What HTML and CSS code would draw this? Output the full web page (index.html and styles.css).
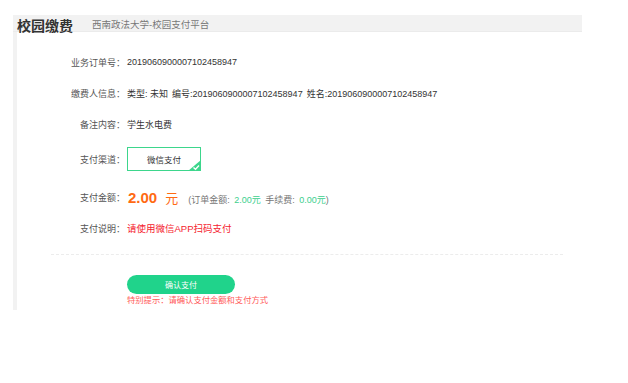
FILE: index.html
```html
<!DOCTYPE html>
<html lang="zh-CN">
<head>
<meta charset="utf-8">
<title>校园缴费</title>
<link rel="stylesheet" href="styles.css">
</head>
<body>
<div class="page">
  <div class="header">
    <span class="title">校园缴费</span>
    <span class="subtitle">西南政法大学-校园支付平台</span>
  </div>
  <div class="main">
    <div class="form">
      <div class="row">
        <div class="label">业务订单号：</div>
        <div class="value">2019060900007102458947</div>
      </div>
      <div class="row">
        <div class="label">缴费人信息：</div>
        <div class="value">
          <span class="part">类型: 未知</span>
          <span class="part">编号:2019060900007102458947</span>
          <span class="part">姓名:2019060900007102458947</span>
        </div>
      </div>
      <div class="row">
        <div class="label">备注内容：</div>
        <div class="value">学生水电费</div>
      </div>
      <div class="row row-channel">
        <div class="label">支付渠道：</div>
        <div class="value">
          <div class="channel">
            微信支付
            <svg class="corner" width="13" height="11" viewBox="0 0 13 11">
              <polygon points="13,0 13,11 0,11" fill="#3dd68c"/>
              <polyline points="5.5,7.5 7.5,9.3 11,5.5" fill="none" stroke="#fff" stroke-width="1.3"/>
            </svg>
          </div>
        </div>
      </div>
      <div class="row row-amount">
        <div class="label">支付金额：</div>
        <div class="value amount-line">
          <span class="amount">2.00</span>
          <span class="yuan">元</span>
          <span class="detail">(订单金额: <span class="green">2.00元</span> 手续费: <span class="green">0.00元</span>)</span>
        </div>
      </div>
      <div class="row">
        <div class="label">支付说明：</div>
        <div class="value desc">请使用微信APP扫码支付</div>
      </div>
    </div>
    <div class="divider"></div>
    <div class="actions">
      <button class="confirm" type="button">确认支付</button>
      <div class="tip">特别提示：请确认支付金额和支付方式</div>
    </div>
  </div>
</div>
</body>
</html>
```

FILE: styles.css
```css
* {
  box-sizing: border-box;
}

body {
  margin: 0;
  background: #fff;
  font-family: "Liberation Sans", "Noto Sans CJK SC", sans-serif;
  color: #333;
}

.page {
  margin-left: 13px;
  margin-top: 15px;
  width: 569px;
}

.header {
  height: 17px;
  background: #f2f2f2;
  border-bottom: 1px solid #ebebeb;
  display: flex;
  align-items: baseline;
  padding-left: 4px;
}

.title {
  font-size: 14px;
  font-weight: bold;
  color: #333;
  line-height: 17px;
  position: relative;
  top: 3px;
}

.subtitle {
  margin-left: 19px;
  font-size: 9.5px;
  color: #777;
  line-height: 17px;
}

.main {
  border-left: 4px solid #f2f2f2;
  padding-top: 22px;
  height: 278px;
}

.form {
  display: flex;
  flex-direction: column;
  gap: 15px;
}

.row {
  display: flex;
  align-items: center;
  height: 16px;
}

.row-channel {
  height: 24px;
}

.row-amount {
  height: 18px;
  margin-top: 2px;
  margin-bottom: -1px;
}

.label {
  width: 108px;
  text-align: right;
  font-size: 9px;
  color: #555;
  flex: none;
}

.value {
  margin-left: 2px;
  font-size: 9px;
  color: #333;
  display: flex;
  align-items: center;
}

.part + .part {
  margin-left: 4px;
}

.channel {
  position: relative;
  width: 74px;
  height: 24px;
  border: 1.5px solid #3dd68c;
  display: flex;
  align-items: center;
  justify-content: center;
  font-size: 8.5px;
  color: #333;
}

.corner {
  position: absolute;
  right: -1px;
  bottom: -1px;
}

.amount-line {
  align-items: baseline;
}

.amount {
  font-size: 15px;
  font-weight: bold;
  color: #ff6a13;
  margin-left: 1px;
}

.yuan {
  font-size: 13px;
  color: #ff6a13;
  margin-left: 8px;
}

.detail {
  margin-left: 10px;
  font-size: 9px;
  color: #777;
  word-spacing: 2px;
}

.green {
  color: #3ccf8e;
}

.desc {
  color: #f5222d;
  font-size: 9.5px;
}

.divider {
  margin-top: 18px;
  margin-left: 34px;
  width: 512px;
  border-top: 1px dashed #ececec;
}

.actions {
  margin-left: 110px;
  margin-top: 20px;
}

.confirm {
  display: block;
  width: 108px;
  height: 19px;
  border: none;
  border-radius: 10px;
  background: #20d38b;
  color: #fff;
  font-family: "Liberation Sans", "Noto Sans CJK SC", sans-serif;
  font-size: 8px;
  padding: 0;
}

.tip {
  margin-top: 1px;
  font-size: 8.3px;
  color: #ff5a5a;
  line-height: 11px;
}
```
